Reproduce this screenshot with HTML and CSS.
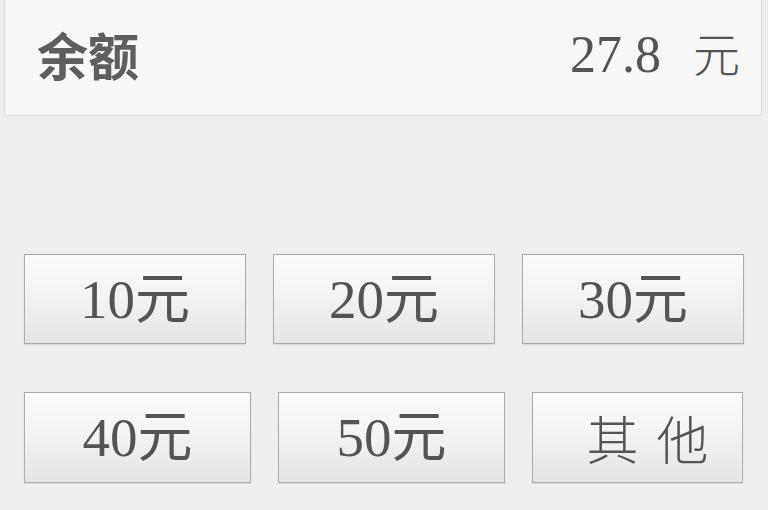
FILE: index.html
```html
<!DOCTYPE html>
<html lang="zh-CN">
<head>
<meta charset="utf-8">
<title>余额</title>
<link rel="stylesheet" href="styles.css">
</head>
<body>
<div class="card">
  <div class="label">余额</div>
  <div class="amount"><span class="num">27.8</span><span class="unit">元</span></div>
</div>
<div class="options">
  <div class="row row1">
    <button class="btn">10元</button>
    <button class="btn">20元</button>
    <button class="btn">30元</button>
  </div>
  <div class="row row2">
    <button class="btn">40元</button>
    <button class="btn">50元</button>
    <button class="btn other">其<span class="sp"></span>他</button>
  </div>
</div>
</body>
</html>
```

FILE: styles.css
```css
html, body {
  margin: 0;
  padding: 0;
  background: #efefef;
  width: 768px;
  height: 510px;
  overflow: hidden;
}
body {
  font-family: "Liberation Serif", "Noto Sans CJK SC", serif;
  color: #555;
}
.card {
  margin: 0 6px 0 4px;
  height: 116px;
  box-sizing: border-box;
  background: #f7f7f7;
  border: 1px solid #dadada;
  border-top: none;
  display: flex;
  align-items: center;
  justify-content: space-between;
  padding: 0 21px 6px 32px;
}
.label {
  font-family: "Noto Sans CJK SC", sans-serif;
  font-weight: bold;
  font-size: 51px;
  color: #5e5e5e;
  line-height: 1;
}
.amount {
  font-size: 52px;
  line-height: 1;
  color: #545454;
  display: flex;
  align-items: baseline;
}
.unit {
  font-family: "Noto Sans CJK SC", sans-serif;
  font-weight: 300;
  font-size: 47px;
  margin-left: 32px;
}
.options {
  padding: 138px 0 0 24px;
  display: flex;
  flex-direction: column;
  gap: 48px;
}
.row {
  display: grid;
  height: 90px;
}
.row1 {
  grid-template-columns: 222px 222px 222px;
  column-gap: 27px;
}
.row2 {
  grid-template-columns: 227px 227px 211px;
  column-gap: 27px;
  height: 91px;
}
.btn {
  margin: 0;
  padding: 0;
  border: 1px solid #ababab;
  background: linear-gradient(#fbfbfb 0%, #f4f4f4 45%, #e4e4e4 100%);
  box-shadow: 0 1px 1px rgba(0,0,0,0.08);
  font-family: "Liberation Serif", "Noto Sans CJK SC", serif;
  font-size: 55px;
  color: #545454;
  line-height: 1;
  display: flex;
  align-items: center;
  justify-content: center;
}
.other {
  font-family: "Noto Sans CJK SC", sans-serif;
  font-weight: 300;
  font-size: 52px;
  padding-left: 20px;
}
.sp {
  display: inline-block;
  width: 18px;
}
```
